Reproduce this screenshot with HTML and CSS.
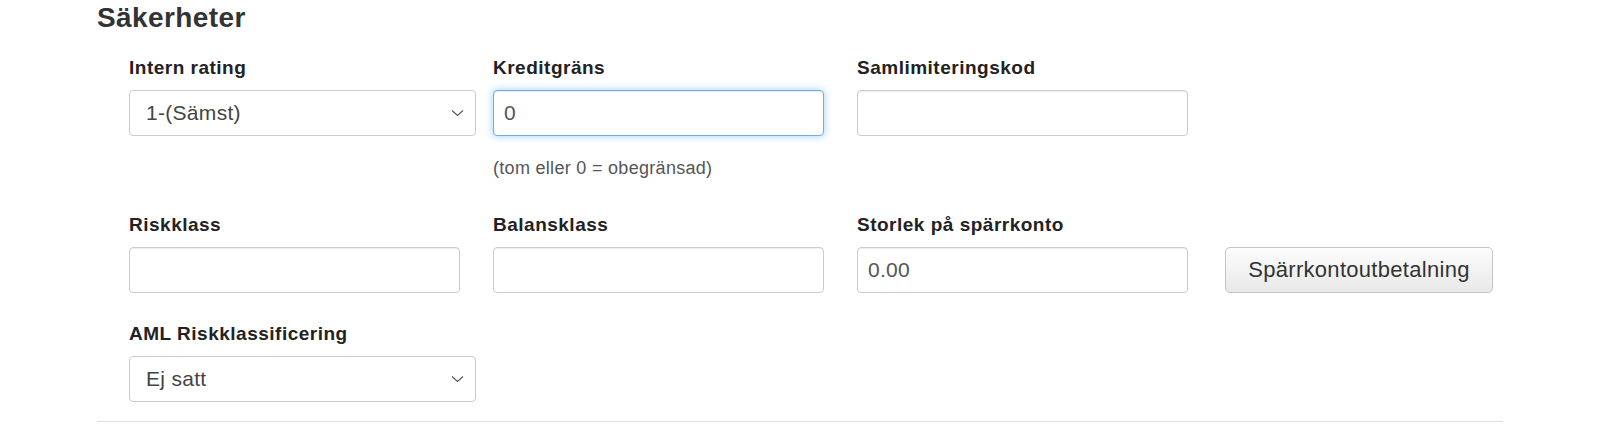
FILE: index.html
```html
<!DOCTYPE html>
<html lang="sv">
<head>
<meta charset="utf-8">
<title>Säkerheter</title>
<link rel="stylesheet" href="styles.css">
</head>
<body>
<section class="section">
  <h2 class="title">Säkerheter</h2>
  <div class="form-grid">
    <div class="field">
      <label class="label">Intern rating</label>
      <div class="select">
        <span class="select-value">1-(Sämst)</span>
        <svg class="chevron" width="13" height="8" viewBox="0 0 13 8"><path d="M1 1.5l5.5 5 5.5-5" fill="none" stroke="#555" stroke-width="1.1"/></svg>
      </div>
    </div>
    <div class="field">
      <label class="label">Kreditgräns</label>
      <div class="input focused">0</div>
      <div class="hint">(tom eller 0 = obegränsad)</div>
    </div>
    <div class="field">
      <label class="label">Samlimiteringskod</label>
      <div class="input"></div>
    </div>
    <div class="field"></div>

    <div class="field">
      <label class="label">Riskklass</label>
      <div class="input"></div>
    </div>
    <div class="field">
      <label class="label">Balansklass</label>
      <div class="input"></div>
    </div>
    <div class="field">
      <label class="label">Storlek på spärrkonto</label>
      <div class="input">0.00</div>
    </div>
    <div class="field field-end">
      <button class="btn" type="button">Spärrkontoutbetalning</button>
    </div>

    <div class="field">
      <label class="label">AML Riskklassificering</label>
      <div class="select">
        <span class="select-value">Ej satt</span>
        <svg class="chevron" width="13" height="8" viewBox="0 0 13 8"><path d="M1 1.5l5.5 5 5.5-5" fill="none" stroke="#555" stroke-width="1.1"/></svg>
      </div>
    </div>
  </div>
  <div class="rule"></div>
</section>
</body>
</html>
```
FILE: styles.css
```css
html, body {
  margin: 0;
  padding: 0;
  background: #fff;
}
body {
  font-family: "Liberation Sans", Arial, Helvetica, sans-serif;
  color: #333;
}
.section {
  padding: 0 97px;
}
.title {
  margin: 0;
  font-size: 28px;
  letter-spacing: 0.4px;
  line-height: 36px;
  font-weight: bold;
  color: #333;
}
.form-grid {
  margin-top: 22px;
  padding-left: 32px;
  display: grid;
  grid-template-columns: repeat(4, 364px);
  align-items: start;
}
.field {
  display: flex;
  flex-direction: column;
  align-items: flex-start;
  margin-bottom: 31px;
}
.field-end {
  align-self: end;
}
.label {
  font-size: 19px;
  letter-spacing: 0.5px;
  line-height: 20px;
  font-weight: bold;
  color: #222;
  margin-bottom: 12px;
}
.input, .select {
  box-sizing: border-box;
  height: 46px;
  border: 1px solid #ccc;
  border-radius: 4px;
  background: #fff;
  font-size: 21px;
  letter-spacing: 0.3px;
  color: #555;
  display: flex;
  align-items: center;
}
.input {
  width: 331px;
  padding: 0 10px;
  box-shadow: inset 0 1px 1px rgba(0,0,0,.075);
}
.input.focused {
  border-color: #66afe9;
  box-shadow: inset 0 1px 1px rgba(0,0,0,.075), 0 0 8px rgba(102,175,233,.6);
}
.select {
  width: 347px;
  padding: 0 11px 0 16px;
  justify-content: space-between;
}
.select-value {
  color: #444;
}
.chevron {
  display: block;
}
.hint {
  margin-top: 22px;
  margin-bottom: 6px;
  font-size: 18px;
  letter-spacing: 0.3px;
  line-height: 20px;
  color: #555;
}
.btn {
  box-sizing: border-box;
  margin-left: 4px;
  width: 268px;
  height: 46px;
  border: 1px solid #c4c4c4;
  border-radius: 5px;
  background: linear-gradient(#fdfdfd, #e8e8e8);
  font-family: inherit;
  font-size: 22px;
  letter-spacing: 0.3px;
  color: #333;
  padding: 0;
}
.rule {
  margin-top: -12px;
  border-top: 1px solid #ddd;
}
```
